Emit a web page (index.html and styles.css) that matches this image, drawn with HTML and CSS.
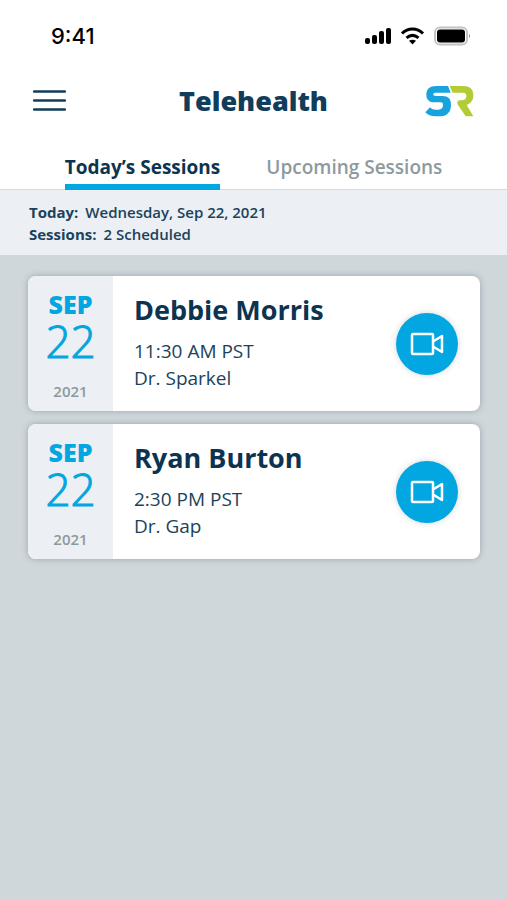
FILE: index.html
```html
<!DOCTYPE html>
<html lang="en">
<head>
<meta charset="utf-8">
<meta name="viewport" content="width=device-width, initial-scale=1">
<title>Telehealth</title>
<link rel="stylesheet" href="styles.css">
</head>
<body>
<div class="status">
  <span class="clock">9:41</span>
  <svg class="status-icons" viewBox="0 0 108 20" aria-hidden="true">
    <g fill="#000"><rect x="2" y="12" width="5" height="6" rx="2"/><rect x="9" y="9" width="5" height="9" rx="2"/><rect x="16" y="5" width="5" height="13" rx="2"/><rect x="23" y="2" width="5" height="16" rx="2"/></g>
    <g fill="none" stroke="#000" stroke-width="3"><path d="M39 7.500C45 1.500 54 1.500 60 7.500"/><path d="M43.500 11.800C47.500 8.500 51.500 8.500 55.500 11.800"/></g>
    <path d="M46 14.800Q49.500 12.500 53 14.800L49.500 18.500Z"/>
    <rect x="72" y="1.500" width="32" height="17" rx="5" fill="#fff" stroke="#c4c4c4" stroke-width="2"/>
    <rect x="74" y="3.500" width="28" height="13" rx="3"/>
    <path d="M106 8Q108 10 106 12Z" fill="#888"/>
  </svg>
</div>
<header class="header">
  <button class="menu" type="button" aria-label="Menu">
    <svg viewBox="0 0 33 22" aria-hidden="true"><path d="M1 1.500H32M1 10.500H32M1 19.500H32" stroke="#123d5a" stroke-width="2.400" stroke-linecap="round"/></svg>
  </button>
  <h1 class="title">Telehealth</h1>
  <svg class="logo" viewBox="0 0 147 96" role="img" aria-label="SR">
    <path d="M69 3H34C14 3 4 13 4 29C4 45 14 52 29 52H46C52 52 54 54 54 60C54 69 49 74 40 74H32C24 74 19 71 15 67L1 82C8 90 18 94 31 94H42C66 94 78 81 78 59C78 41 69 33 53 33H32C27 33 25 32 25 28C25 25 27 23 33 23H77Z" fill="#17a3dd"/>
    <path d="M74 3H116C136 3 145 14 145 31C145 46 138 55 125 60L145 94H122L99 60C95 52 97 46 106 46H112C120 45 124 40 124 33C124 26 121 23 114 23H83Z" fill="#b3cc35"/>
  </svg>
</header>
<nav class="tabs">
  <a class="tab active" href="#today">Today’s Sessions</a>
  <a class="tab" href="#upcoming">Upcoming Sessions</a>
</nav>
<section class="summary">
  <p><b>Today:</b>Wednesday, Sep 22, 2021</p>
  <p><b>Sessions:</b>2 Scheduled</p>
</section>
<main class="list" id="today">
  <article class="card">
    <div class="date"><span class="month">SEP</span><span class="day">22</span><span class="year">2021</span></div>
    <div class="details"><h2>Debbie Morris</h2><p>11:30 AM PST</p><p>Dr. Sparkel</p></div>
    <button class="call" type="button" aria-label="Join video call with Debbie Morris">
      <svg viewBox="0 0 34 24" aria-hidden="true"><rect x="2" y="2" width="21" height="20" rx="1"/><path d="M23 9.500L32 4V20L23 14.500"/></svg>
    </button>
  </article>
  <article class="card">
    <div class="date"><span class="month">SEP</span><span class="day">22</span><span class="year">2021</span></div>
    <div class="details"><h2>Ryan Burton</h2><p>2:30 PM PST</p><p>Dr. Gap</p></div>
    <button class="call" type="button" aria-label="Join video call with Ryan Burton">
      <svg viewBox="0 0 34 24" aria-hidden="true"><rect x="2" y="2" width="21" height="20" rx="1"/><path d="M23 9.500L32 4V20L23 14.500"/></svg>
    </button>
  </article>
</main>
</body>
</html>
```
FILE: styles.css
```css
* { box-sizing: border-box; }
body {
  margin: 0;
  min-height: 100vh;
  background: #cfd7db;
  color: #1b425c;
  font-family: "Open Sans", "Noto Sans", sans-serif;
}
h1, h2, p { margin: 0; }
button { border: 0; padding: 0; background: none; cursor: pointer; }
svg { display: block; }
.status {
  display: flex;
  justify-content: space-between;
  align-items: center;
  height: 72px;
  padding: 0 36px 0 51px;
  background: #fff;
}
.clock { font: 500 22px/28px Inter, sans-serif; color: #000; }
.status-icons { width: 108px; height: 20px; }
.header {
  display: grid;
  grid-template-columns: 49px 1fr 49px;
  align-items: center;
  height: 58px;
  padding: 0 33px;
  background: #fff;
}
.menu svg { width: 33px; height: 22px; }
.title {
  text-align: center;
  font-size: 27px;
  line-height: 36px;
  font-weight: 800;
  color: #123d5a;
}
.logo { width: 49px; height: 32px; }
.tabs {
  display: flex;
  justify-content: center;
  gap: 46px;
  height: 60px;
  padding-top: 24px;
  background: #fff;
  box-shadow: inset 0 -1px #d5dadd;
}
.tab {
  font-size: 19px;
  line-height: 26px;
  font-weight: 600;
  color: #8d9a9d;
  text-decoration: none;
}
.tab.active { border-bottom: 6px solid #02a6e0; color: #0c3450; font-weight: 700; }
.summary {
  padding: 11px 29px 10px;
  background: #ecf0f4;
  font-size: 15px;
  line-height: 22px;
  font-weight: 600;
}
.summary b { margin-right: 7px; font-weight: 700; }
.list {
  display: flex;
  flex-direction: column;
  gap: 13px;
  padding: 21px 27px 21px 28px;
}
.card {
  display: flex;
  align-items: center;
  border-radius: 8px;
  background: #fff;
  box-shadow: 0 0 6px rgba(70, 90, 105, 0.4);
}
.date {
  display: flex;
  flex-direction: column;
  align-items: center;
  width: 85px;
  height: 135px;
  padding-top: 12px;
  border-radius: 8px 0 0 8px;
  background: #ecf0f4;
  color: #02a6e0;
}
.month { font-size: 25px; line-height: 32px; font-weight: 800; }
.day { font-size: 44px; line-height: 42px; font-weight: 300; -webkit-text-stroke: 1px #02a6e0; }
.year { margin-top: 18px; font-size: 15px; line-height: 22px; font-weight: 600; color: #8d9a9d; }
.details { flex: 1; align-self: flex-start; padding: 16px 0 16px 21px; }
.details h2 { margin-bottom: 10px; font-size: 27px; line-height: 36px; font-weight: 700; color: #0c3450; }
.details p { font-size: 19px; line-height: 27px; }
.call {
  display: grid;
  place-items: center;
  width: 62px;
  height: 62px;
  margin-right: 22px;
  border-radius: 50%;
  background: #02a6e0;
  box-shadow: 0 0 6px rgba(70, 90, 105, 0.25);
}
.call svg { width: 34px; height: 24px; fill: none; stroke: #fff; stroke-width: 2.500; stroke-linejoin: round; }
```
